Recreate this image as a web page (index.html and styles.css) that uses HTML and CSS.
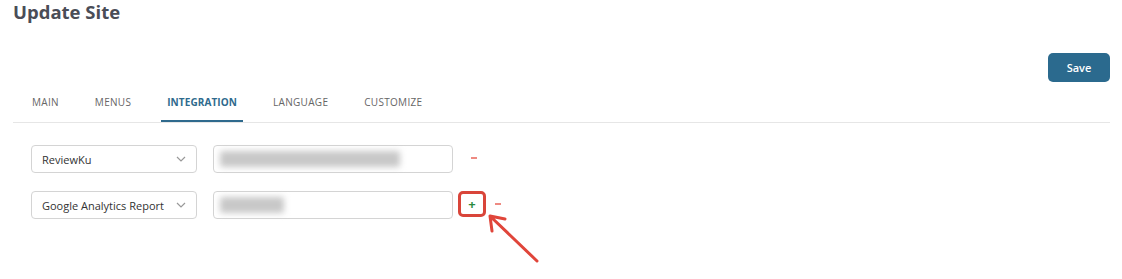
FILE: index.html
```html
<!DOCTYPE html>
<html>
<head>
<meta charset="utf-8">
<link rel="stylesheet" href="styles.css">
</head>
<body>
<div class="page">
  <h1 class="title">Update Site</h1>
  <div class="actions"><button class="save">Save</button></div>
  <nav class="tabs">
    <span class="tab">MAIN</span>
    <span class="tab">MENUS</span>
    <span class="tab active">INTEGRATION</span>
    <span class="tab">LANGUAGE</span>
    <span class="tab">CUSTOMIZE</span>
  </nav>
  <div class="rows">
    <div class="row">
      <div class="select"><span>ReviewKu</span><svg class="chev" width="10" height="6" viewBox="0 0 10 6"><path d="M1 1l4 4 4-4" fill="none" stroke="#999" stroke-width="1.2"/></svg></div>
      <div class="input"><span class="blur" style="width:180px"></span></div>
      <span class="minus"></span>
    </div>
    <div class="row">
      <div class="select"><span>Google Analytics Report</span><svg class="chev" width="10" height="6" viewBox="0 0 10 6"><path d="M1 1l4 4 4-4" fill="none" stroke="#999" stroke-width="1.2"/></svg></div>
      <div class="input"><span class="blur" style="width:64px"></span></div>
      <span class="plusbox"><span class="plus">+</span></span>
      <span class="minus second"></span>
    </div>
    <svg class="arrow" viewBox="0 0 70 70"><path d="M6 5 L52 49 M5 4 L7 19 M5 4 L20 7" fill="none" stroke="#e0453a" stroke-width="3" stroke-linecap="round" stroke-linejoin="round"/></svg>
  </div>
</div>
</body>
</html>
```
FILE: styles.css
```css
* { box-sizing: border-box; }
html, body { margin: 0; background: #fff; font-family: "Open Sans", "Liberation Sans", sans-serif; overflow: hidden; }
.page { padding: 0 12px 0 13px; height: 279px; }
.title { margin: 0; font-size: 18.5px; font-weight: 700; color: #4a4d57; line-height: 24px; }
.actions { display: flex; justify-content: flex-end; margin-top: 29px; }
.save { width: 62px; height: 29px; border: none; border-radius: 5px; background: #2b6a8e; color: #fff; font-family: inherit; font-size: 11px; font-weight: 600; padding: 0; }
.tabs { display: flex; margin-top: 0; border-bottom: 1px solid #e6e6e6; padding-left: 13px; }
.tab { font-size: 10px; color: #666; padding: 0 6px; height: 40px; line-height: 40px; margin-right: 24px; letter-spacing: 0.3px; }
.tab.active { color: #2f6a8d; font-weight: 700; letter-spacing: 0.1px; border-bottom: 2px solid #2f6a8d; }
.rows { position: relative; display: flex; flex-direction: column; gap: 18px; padding-top: 22px; padding-left: 18px; }
.row { display: flex; align-items: flex-start; height: 28px; }
.select { width: 166px; height: 28px; border: 1px solid #d4d4d4; border-radius: 4px; display: flex; align-items: center; justify-content: space-between; padding: 0 10px; font-size: 11px; color: #333; }
.input { width: 240px; height: 28px; border: 1px solid #d4d4d4; border-radius: 4px; margin-left: 16px; display: flex; align-items: center; padding-left: 6px; }
.blur { display: block; height: 16px; background: #c8c8c8; filter: blur(3px); border-radius: 2px; }
.minus { display: block; width: 6px; height: 2px; background: #ee8a82; margin: 12px 0 0 18px; }
.plusbox { margin-left: 5px; width: 28px; height: 26px; border: 3px solid #d9453a; border-radius: 5px; display: flex; align-items: center; justify-content: center; }
.plus { color: #2c8a3e; font-size: 13px; font-weight: 700; line-height: 1; }
.minus.second { margin-left: 9px; }
.arrow { position: absolute; display: block; left: 472px; top: 89px; width: 70px; height: 70px; overflow: visible; }
```
